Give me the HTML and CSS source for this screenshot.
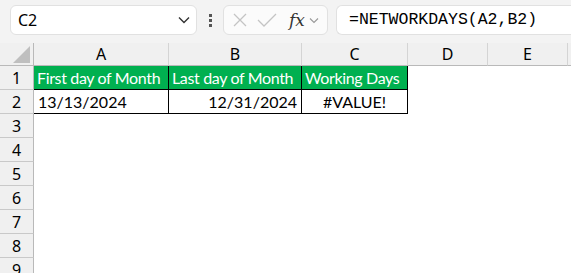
FILE: index.html
```html
<!DOCTYPE html>
<html lang="en">

<head>
  <meta charset="UTF-8" />
  <title>Workbook</title>
  <link rel="stylesheet" href="styles.css">
</head>

<body>
  <div class="toolbar">
    <div class="name-box">
      <span>C2</span>
      <svg class="chev" width="12" height="8" viewBox="0 0 12 8"><path d="M1 1.5 L6 6.5 L11 1.5" fill="none" stroke="#333" stroke-width="1.4" /></svg>
    </div>
    <div class="dots"><i></i><i></i><i></i></div>
    <div class="fx-box">
      <svg width="16" height="16" viewBox="0 0 16 16"><path d="M2 2 L14 14 M14 2 L2 14" stroke="#c4c4c4" stroke-width="1.3" fill="none" /></svg>
      <svg class="check" width="20" height="16" viewBox="0 0 20 16"><path d="M1 8 L7 14 L19 2" stroke="#c4c4c4" stroke-width="1.3" fill="none" /></svg>
      <span class="fx">fx</span>
      <svg width="10" height="7" viewBox="0 0 10 7"><path d="M1 1.5 L5 5.5 L9 1.5" fill="none" stroke="#999" stroke-width="1.1" /></svg>
    </div>
    <div class="formula">=NETWORKDAYS(A2,B2)</div>
  </div>

  <div class="sheet">
    <div class="corner"><span class="tri"></span></div>
    <div class="col-head">A</div>
    <div class="col-head">B</div>
    <div class="col-head">C</div>
    <div class="col-head">D</div>
    <div class="col-head">E</div>
    <div class="col-head last"></div>

    <div class="row-head">1</div>
    <div class="cell title">First day of Month</div>
    <div class="cell title">Last day of Month</div>
    <div class="cell title">Working Days</div>
    <div class="blank"></div>
    <div class="blank"></div>
    <div class="blank"></div>

    <div class="row-head">2</div>
    <div class="cell">13/13/2024</div>
    <div class="cell right">12/31/2024</div>
    <div class="cell center">#VALUE!</div>
    <div class="blank"></div>
    <div class="blank"></div>
    <div class="blank"></div>

    <div class="row-head">3</div><div class="blank wide"></div>
    <div class="row-head">4</div><div class="blank wide"></div>
    <div class="row-head">5</div><div class="blank wide"></div>
    <div class="row-head">6</div><div class="blank wide"></div>
    <div class="row-head">7</div><div class="blank wide"></div>
    <div class="row-head">8</div><div class="blank wide"></div>
    <div class="row-head">9</div><div class="blank wide"></div>
  </div>
</body>

</html>
```

FILE: styles.css
```css
body {
  margin: 0;
  background: #fff;
  font-family: "Noto Sans", "Open Sans", sans-serif;
  color: #000;
  overflow: hidden;
}

.toolbar {
  height: 43px;
  background: #f3f3f3;
  display: flex;
  align-items: flex-start;
  padding: 5px 0 0 10px;
  box-sizing: border-box;
}

.name-box {
  width: 187px;
  height: 30px;
  box-sizing: border-box;
  background: #fff;
  border: 1px solid #e1e1e1;
  border-radius: 6px;
  display: flex;
  align-items: center;
  justify-content: space-between;
  padding: 0 6px 0 7px;
  font-size: 16px;
}

.dots {
  width: 26px;
  height: 30px;
  display: flex;
  flex-direction: column;
  align-items: center;
  justify-content: center;
  gap: 2px;
}

.dots i {
  width: 3px;
  height: 3px;
  background: #555;
}

.fx-box {
  width: 105px;
  height: 30px;
  box-sizing: border-box;
  background: #fbfbfb;
  border: 1px solid #e1e1e1;
  border-radius: 6px;
  display: flex;
  align-items: center;
  padding-left: 8px;
}

.fx-box .check {
  margin-left: 9px;
}

.fx {
  font-family: "DejaVu Serif", "Liberation Serif", serif;
  font-style: italic;
  font-size: 17px;
  color: #333;
  margin: 0 4px 0 12px;
}

.formula {
  flex: 1;
  margin-left: 8px;
  height: 30px;
  box-sizing: border-box;
  background: #fff;
  border: 1px solid #e1e1e1;
  border-right: none;
  border-radius: 6px 0 0 6px;
  padding-left: 12px;
  font-family: "Liberation Mono", monospace;
  font-size: 16.5px;
  line-height: 28px;
}

.sheet {
  display: grid;
  grid-template-columns: 34px 135px 133px 106px 80px 80px 1fr;
  grid-template-rows: 23px;
  grid-auto-rows: 24px;
}

.corner,
.col-head {
  background: #f0f0f0;
  border-right: 1px solid #d4d4d4;
  border-bottom: 1px solid #b9b9b9;
  text-align: center;
  line-height: 22px;
  font-size: 16px;
}

.corner {
  border-right-color: #b9b9b9;
  position: relative;
}

.tri {
  position: absolute;
  right: 3px;
  bottom: 2px;
  width: 0;
  height: 0;
  border-left: 17px solid transparent;
  border-bottom: 17px solid #bfbfbf;
}

.col-head.last {
  border-right: none;
}

.row-head {
  background: #f0f0f0;
  border-right: 1px solid #b9b9b9;
  border-bottom: 1px solid #c9c9c9;
  text-align: center;
  line-height: 24px;
  font-size: 16px;
}

.cell {
  font-family: "Lato", sans-serif;
  font-size: 16px;
  line-height: 23px;
  padding: 0 4px;
  border-right: 1px solid #000;
  border-bottom: 1px solid #000;
  white-space: nowrap;
  overflow: hidden;
}

.title {
  background: #00b050;
  color: #fff;
  letter-spacing: -0.35px;
  padding: 0 2px 0 3px;
}

.right {
  text-align: right;
}

.center {
  text-align: center;
}

.wide {
  grid-column: span 6;
}
```
